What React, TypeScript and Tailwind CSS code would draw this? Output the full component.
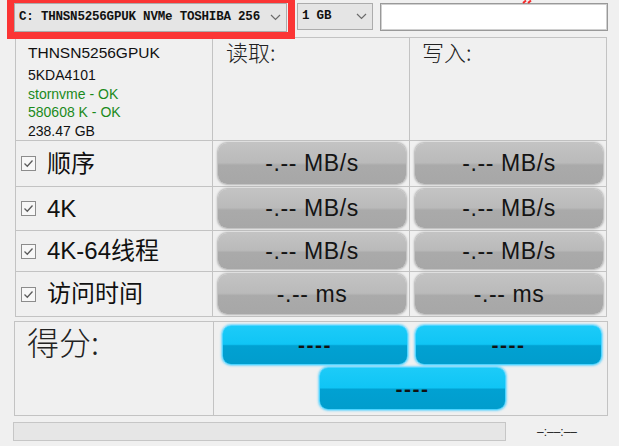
import React from 'react';

const sans = "font-['Liberation_Sans','Noto_Sans_CJK_SC',sans-serif]";
const cjk = "font-['Noto_Sans_CJK_SC','Liberation_Sans',sans-serif]";

function Chevron() {
  return (
    <svg width="11" height="7" viewBox="0 0 11 7" className="shrink-0">
      <path d="M1 1 L5.5 5.5 L10 1" fill="none" stroke="#6b6b6b" strokeWidth="1.2" />
    </svg>
  );
}

function Combo({ label, className }: { label: string; className: string }) {
  return (
    <div
      className={`flex items-center justify-between bg-[#e5e5e5] border border-[#acacac] pl-[4px] pr-[5px] font-['Liberation_Mono',monospace] font-semibold text-[12.5px] tracking-[-0.2px] text-[#111] ${className}`}
    >
      <span className="whitespace-pre">{label}</span>
      <Chevron />
    </div>
  );
}

function CheckBox() {
  return (
    <svg width="15" height="15" viewBox="0 0 15 15" className="shrink-0">
      <rect x="0.5" y="0.5" width="14" height="14" fill="#f7f7f7" stroke="#8c8c8c" />
      <path d="M3.5 7.5 L6.3 10.2 L11.5 4.5" fill="none" stroke="#5c5c5c" strokeWidth="1.3" />
    </svg>
  );
}

function ResultButton({ text }: { text: string }) {
  return (
    <div className="h-full rounded-[9px] bg-[linear-gradient(to_bottom,#c3c3c3_0%,#bababa_48%,#aaaaaa_54%,#a7a7a7_100%)] shadow-[0_0_2px_1px_rgba(130,130,130,0.55)] flex items-center justify-center text-[23px] text-[#141414] tracking-[0.6px]">
      {text}
    </div>
  );
}

function ScoreButton({ className }: { className: string }) {
  return (
    <div
      className={`rounded-[9px] border border-[#4fd4ff] bg-[linear-gradient(to_bottom,#1ccbf8_0%,#10c5f5_48%,#01a1d2_52%,#019dcd_100%)] shadow-[0_0_2px_1px_rgba(90,210,255,0.8)] flex items-center justify-center font-bold text-[21px] text-[#111] tracking-[1.5px] ${className}`}
    >
      ----
    </div>
  );
}

const rows = [
  { label: '顺序', unit: 'MB/s' },
  { label: '4K', unit: 'MB/s' },
  { label: '4K-64线程', unit: 'MB/s' },
  { label: '访问时间', unit: 'ms' },
];

export default function App() {
  return (
    <div className={`relative w-[619px] h-[446px] overflow-hidden bg-[#f0f0f0] ${sans}`}>
      {/* drive / size selectors */}
      <div className="flex items-start h-[37px] pt-[3px] pl-[14px]">
        <Combo label="C: THNSN5256GPUK NVMe TOSHIBA 256" className="w-[273px] h-[29px]" />
        <Combo label="1 GB" className="ml-[10px] w-[76px] h-[27px]" />
        <div className="ml-[7px] w-[228px] h-[28px] bg-white border border-[#999] shadow-[inset_0_0_0_1px_#d0d0d0]" />
      </div>

      {/* results table */}
      <div className="ml-[15px] w-[592px] grid grid-cols-[197px_197px_197px] grid-rows-[103px_46px_44px_41px_45px] border-l border-t border-[#c3c3c3]">
        <div className="border-r border-b border-[#c3c3c3] pl-[12px] pt-[4px] text-[#111]">
          <div className="text-[15.5px] leading-[22px]">THNSN5256GPUK</div>
          <div className="text-[14px] leading-[19px] mt-[2px]">5KDA4101</div>
          <div className="text-[14px] leading-[18px] text-[#1b8a1b]">stornvme - OK</div>
          <div className="text-[14px] leading-[19px] text-[#1b8a1b]">580608 K - OK</div>
          <div className="text-[14px] leading-[18px]">238.47 GB</div>
        </div>
        <div className={`border-r border-b border-[#c3c3c3] pl-[13px] text-[22px] leading-[26px] text-[#222] font-light ${cjk}`}>读取:</div>
        <div className={`border-r border-b border-[#c3c3c3] pl-[12px] text-[22px] leading-[26px] text-[#222] font-light ${cjk}`}>写入:</div>

        {rows.map((row) => (
          <React.Fragment key={row.label}>
            <div className="border-r border-b border-[#c3c3c3] flex items-center pl-[5px] gap-[11px]">
              <CheckBox />
              <span className="text-[24px] text-[#111] leading-none">{row.label}</span>
            </div>
            <div className="border-r border-b border-[#c3c3c3] pl-[5px] pr-[3px] py-[2px]">
              <ResultButton text={`-.-- ${row.unit}`} />
            </div>
            <div className="border-r border-b border-[#c3c3c3] pl-[5px] pr-[3px] py-[2px]">
              <ResultButton text={`-.-- ${row.unit}`} />
            </div>
          </React.Fragment>
        ))}
      </div>

      {/* score panel */}
      <div className="mt-[4px] ml-[14px] w-[594px] h-[95px] flex border border-[#c3c3c3]">
        <div className={`w-[199px] border-r border-[#c3c3c3] pl-[12px] text-[32px] leading-[38px] text-[#222] font-light ${cjk}`}>
          得分:
        </div>
        <div className="flex-1 flex flex-col pt-[3px]">
          <div className="flex pl-[8px] gap-[7px]">
            <ScoreButton className="w-[186px] h-[40px]" />
            <ScoreButton className="w-[187px] h-[40px]" />
          </div>
          <div className="pl-[105px] mt-[2px]">
            <ScoreButton className="w-[187px] h-[43px]" />
          </div>
        </div>
      </div>

      {/* progress + elapsed time */}
      <div className="flex items-center mt-[6px] ml-[13px]">
        <div className="w-[493px] h-[19px] bg-[#e6e6e6] border border-[#c6c6c6]" />
        <span className="ml-[31px] text-[12px] text-[#222]">–:––:––</span>
      </div>

      {/* red highlight around the drive selector */}
      <div className="absolute left-[7px] top-[-4px] w-[288px] h-[43px] border-[7px] border-[#fb3535]" />
      <svg className="absolute left-[521px] top-0" width="16" height="4" viewBox="0 0 16 4">
        <path d="M2 3 L5 0.5 M7 3 L10 0.5" stroke="#f32b2b" strokeWidth="2" fill="none" />
      </svg>
    </div>
  );
}
